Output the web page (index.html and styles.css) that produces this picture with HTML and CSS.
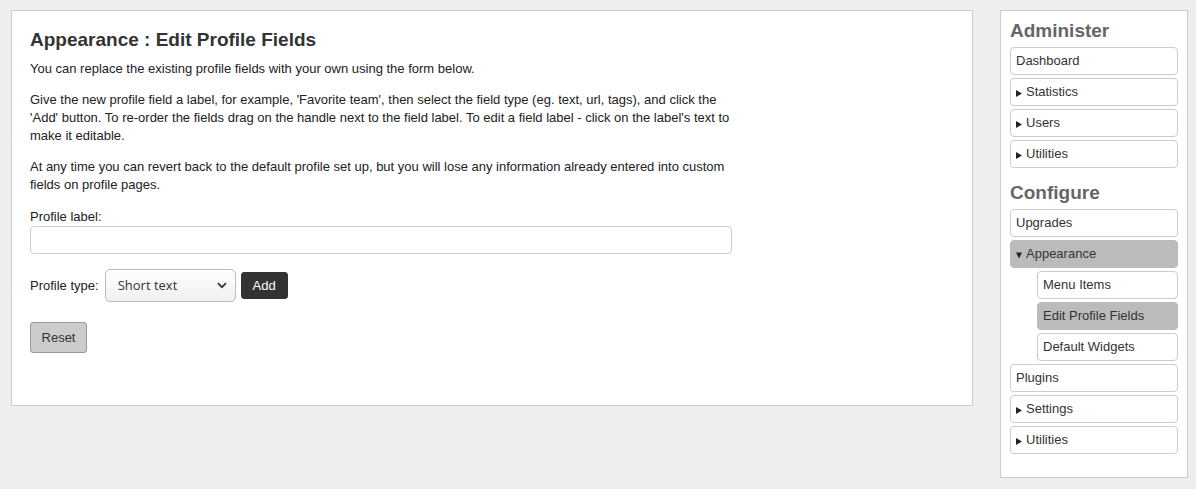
FILE: index.html
```html
<!DOCTYPE html>
<html>
<head>
<meta charset="utf-8">
<link rel="stylesheet" href="styles.css">
</head>
<body>
<div class="layout">
  <main class="panel main">
    <h1 class="title">Appearance : Edit Profile Fields</h1>
    <p class="text">You can replace the existing profile fields with your own using the form below.</p>
    <p class="text">Give the new profile field a label, for example, 'Favorite team', then select the field type (eg. text, url, tags), and click the 'Add' button. To re-order the fields drag on the handle next to the field label. To edit a field label - click on the label's text to make it editable.</p>
    <p class="text">At any time you can revert back to the default profile set up, but you will lose any information already entered into custom fields on profile pages.</p>
    <form class="form">
      <label class="label" for="pl">Profile label:</label>
      <input class="input" id="pl" type="text">
      <div class="typerow">
        <span class="label-inline">Profile type:</span>
        <span class="selectwrap">
          <select class="select"><option>Short text</option></select>
          <svg class="chev" width="10" height="7" viewBox="0 0 10 7"><path d="M1 1.2 L5 5.2 L9 1.2" fill="none" stroke="#333" stroke-width="1.7"/></svg>
        </span>
        <button type="button" class="btn-add">Add</button>
      </div>
      <button type="button" class="btn-reset">Reset</button>
    </form>
  </main>
  <aside class="panel side">
    <h2 class="side-h">Administer</h2>
    <ul class="menu">
      <li class="item">Dashboard</li>
      <li class="item"><svg class="arr" width="6" height="7" viewBox="0 0 6 7"><path d="M0 0 L6 3.5 L0 7 Z" fill="#222"/></svg>Statistics</li>
      <li class="item"><svg class="arr" width="6" height="7" viewBox="0 0 6 7"><path d="M0 0 L6 3.5 L0 7 Z" fill="#222"/></svg>Users</li>
      <li class="item"><svg class="arr" width="6" height="7" viewBox="0 0 6 7"><path d="M0 0 L6 3.5 L0 7 Z" fill="#222"/></svg>Utilities</li>
    </ul>
    <h2 class="side-h second">Configure</h2>
    <ul class="menu">
      <li class="item">Upgrades</li>
      <li class="item active"><svg class="arr" width="6" height="7" viewBox="0 0 6 7"><path d="M0 0.5 L6 0.5 L3 6.5 Z" fill="#222"/></svg>Appearance</li>
      <li class="item sub">Menu Items</li>
      <li class="item sub active">Edit Profile Fields</li>
      <li class="item sub">Default Widgets</li>
      <li class="item">Plugins</li>
      <li class="item"><svg class="arr" width="6" height="7" viewBox="0 0 6 7"><path d="M0 0 L6 3.5 L0 7 Z" fill="#222"/></svg>Settings</li>
      <li class="item"><svg class="arr" width="6" height="7" viewBox="0 0 6 7"><path d="M0 0 L6 3.5 L0 7 Z" fill="#222"/></svg>Utilities</li>
    </ul>
  </aside>
</div>
</body>
</html>
```

FILE: styles.css
```css
html, body {
  margin: 0;
  padding: 0;
  background: #eeeeee;
  font-family: "Liberation Sans", Arial, sans-serif;
  font-size: 13px;
  color: #222;
}
.layout {
  display: flex;
  align-items: flex-start;
  padding: 10px 0 0 11px;
  gap: 27px;
}
.panel {
  background: #fff;
  border: 1px solid #cccccc;
  box-sizing: border-box;
}
.main {
  width: 962px;
  height: 396px;
  padding: 18px 18px 0 18px;
}
.title {
  margin: 0 0 9px 0;
  font-size: 19px;
  line-height: 22px;
  font-weight: bold;
  color: #333;
}
.text {
  margin: 0 0 13px 0;
  line-height: 18px;
  max-width: 712px;
}
.form {
  width: 702px;
  padding-top: 1px;
}
.label {
  display: block;
  line-height: 18px;
}
.input {
  display: block;
  box-sizing: border-box;
  width: 702px;
  height: 28px;
  margin: 0;
  border: 1px solid #cccccc;
  border-radius: 4px;
  background: #fff;
}
.typerow {
  display: flex;
  align-items: center;
  margin-top: 14px;
  height: 34px;
}
.label-inline {
  margin-right: 6px;
}
.selectwrap {
  position: relative;
  display: inline-block;
}
.select {
  -webkit-appearance: none;
  appearance: none;
  box-sizing: border-box;
  width: 131px;
  height: 33px;
  padding: 0 0 0 12px;
  margin: 0;
  border: 1px solid #bbbbbb;
  border-radius: 5px;
  background: linear-gradient(#ffffff, #f0f0f0);
  font-family: "Open Sans", "DejaVu Sans", sans-serif;
  font-size: 13px;
  color: #333;
  display: block;
}
.chev {
  position: absolute;
  right: 9px;
  top: 13px;
  pointer-events: none;
}
.btn-add {
  margin-left: 5px;
  height: 27px;
  width: 47px;
  padding: 0;
  border: 1px solid #333;
  border-radius: 3px;
  background: #333333;
  color: #fff;
  font-family: "Liberation Sans", Arial, sans-serif;
  font-size: 13px;
}
.btn-reset {
  display: block;
  margin-top: 20px;
  width: 57px;
  height: 31px;
  padding: 0;
  border: 1px solid #999999;
  border-radius: 3px;
  background: #cccccc;
  color: #333;
  font-family: "Liberation Sans", Arial, sans-serif;
  font-size: 13px;
}
.side {
  width: 188px;
  height: 468px;
  padding: 9px 9px 0 9px;
}
.side-h {
  margin: 0 0 5px 0;
  font-size: 19px;
  line-height: 22px;
  font-weight: bold;
  color: #666;
}
.side-h.second {
  margin-top: 14px;
}
.menu {
  list-style: none;
  margin: 0;
  padding: 0;
}
.item {
  box-sizing: border-box;
  height: 28px;
  line-height: 26px;
  margin-bottom: 3px;
  padding: 0 5px;
  border: 1px solid #cccccc;
  border-radius: 4px;
  background: #fff;
  color: #333;
  white-space: nowrap;
}
.item.active {
  background: #bbbbbb;
  border-color: #bbbbbb;
}
.item.sub {
  margin-left: 27px;
}
.arr {
  display: inline-block;
  margin-right: 4px;
  vertical-align: -1px;
}
```
